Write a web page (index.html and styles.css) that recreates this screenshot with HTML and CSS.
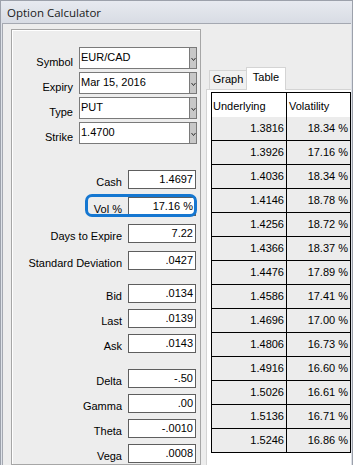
FILE: index.html
```html
<!DOCTYPE html>
<html lang="en">
<head>
    <meta charset="UTF-8">
    <title>Option Calculator</title>
    <link rel="stylesheet" href="styles.css">
</head>
<body>
    <div class="window">
        <div class="titlebar">Option Calculator</div>
        <div class="client">
            <div class="panel">
                <div class="combos">
                    <div class="row"><label>Symbol</label><div class="combo"><span>EUR/CAD</span><i class="drop"><svg width="5" height="3" viewBox="0 0 5 3"><polyline points="0.5,0 2.5,2.5 4.5,0" fill="none" stroke="#333" stroke-width="1"/></svg></i></div></div>
                    <div class="row"><label>Expiry</label><div class="combo"><span>Mar 15, 2016</span><i class="drop"><svg width="5" height="3" viewBox="0 0 5 3"><polyline points="0.5,0 2.5,2.5 4.5,0" fill="none" stroke="#333" stroke-width="1"/></svg></i></div></div>
                    <div class="row"><label>Type</label><div class="combo"><span>PUT</span><i class="drop"><svg width="5" height="3" viewBox="0 0 5 3"><polyline points="0.5,0 2.5,2.5 4.5,0" fill="none" stroke="#333" stroke-width="1"/></svg></i></div></div>
                    <div class="row"><label>Strike</label><div class="combo"><span>1.4700</span><i class="drop"><svg width="5" height="3" viewBox="0 0 5 3"><polyline points="0.5,0 2.5,2.5 4.5,0" fill="none" stroke="#333" stroke-width="1"/></svg></i></div></div>
                </div>

                <div class="fields fields-main">
                    <div class="row"><label>Cash</label><div class="field">1.4697</div></div>
                    <div class="row focused"><label>Vol %</label><div class="field">17.16 %</div></div>
                    <div class="row"><label>Days to Expire</label><div class="field">7.22</div></div>
                    <div class="row"><label>Standard Deviation</label><div class="field">.0427</div></div>
                </div>

                <div class="fields fields-quote">
                    <div class="row"><label>Bid</label><div class="field">.0134</div></div>
                    <div class="row"><label>Last</label><div class="field">.0139</div></div>
                    <div class="row"><label>Ask</label><div class="field">.0143</div></div>
                </div>

                <div class="fields fields-greeks">
                    <div class="row"><label>Delta</label><div class="field">-.50</div></div>
                    <div class="row"><label>Gamma</label><div class="field">.00</div></div>
                    <div class="row"><label>Theta</label><div class="field">-.0010</div></div>
                    <div class="row"><label>Vega</label><div class="field">.0008</div></div>
                </div>
            </div>

            <div class="tabs">
                <div class="tabstrip">
                    <div class="tab">Graph</div>
                    <div class="tab active">Table</div>
                </div>
                <div class="pane">
                    <div class="grid" id="vol-table">
                        <div class="head">Underlying</div>
                        <div class="head">Volatility</div>
                    </div>
                </div>
            </div>
        </div>
    </div>

    <script>
        const rows = [
            ['1.3816', '18.34 %'], ['1.3926', '17.16 %'], ['1.4036', '18.34 %'],
            ['1.4146', '18.78 %'], ['1.4256', '18.72 %'], ['1.4366', '18.37 %'],
            ['1.4476', '17.89 %'], ['1.4586', '17.41 %'], ['1.4696', '17.00 %'],
            ['1.4806', '16.73 %'], ['1.4916', '16.60 %'], ['1.5026', '16.61 %'],
            ['1.5136', '16.71 %'], ['1.5246', '16.86 %']
        ];

        const table = document.getElementById('vol-table');
        rows.forEach(r => {
            r.forEach(val => {
                const cell = document.createElement('div');
                cell.className = 'cell';
                cell.innerText = val;
                table.appendChild(cell);
            });
        });
    </script>
</body>
</html>
```

FILE: styles.css
```css
body {
    margin: 0;
    width: 353px;
    height: 465px;
    overflow: hidden;
    font-family: "Liberation Sans", Arial, sans-serif;
    font-size: 11px;
    color: #000;
}

.window {
    box-sizing: border-box;
    height: 465px;
    display: flex;
    flex-direction: column;
    border: 1px solid #9ca1ab;
    border-bottom: 0;
    padding: 0 1px;
    background: #dde1e8;
}

.titlebar {
    height: 22px;
    margin: 0 -1px;
    padding-left: 6px;
    display: flex;
    align-items: center;
    font-family: "Open Sans", sans-serif;
    font-size: 11.5px;
    color: #1a1a1a;
    background: linear-gradient(#e7eaf0, #d8dce4);
}

.client {
    flex: 1;
    min-height: 0;
    display: flex;
    border-top: 1px solid #a4a8b1;
    border-left: 1px solid #a4a8b1;
    background: #ededed;
    padding: 5px 0 0 8px;
}

/* left side: inputs */
.panel {
    box-sizing: border-box;
    width: 190px;
    border: 1px solid #a6a6a6;
    box-shadow: inset 1px 1px 0 #fff;
    padding: 17px 3px 0 0;
    display: flex;
    flex-direction: column;
}

.combos {
    display: flex;
    flex-direction: column;
    gap: 3px;
}

.row {
    display: flex;
    justify-content: flex-end;
    align-items: flex-end;
    gap: 6px;
}

.row label {
    line-height: 13px;
    white-space: nowrap;
}

.combo {
    box-sizing: border-box;
    width: 118px;
    height: 22px;
    border: 1px solid #7a7a7a;
    background: #fff;
    display: flex;
}

.combo span {
    flex: 1;
    padding: 3px 0 0 1px;
    line-height: 13px;
}

.drop {
    width: 6px;
    border-left: 1px solid #7a7a7a;
    background: #c8c8c8;
    display: flex;
    align-items: center;
    justify-content: center;
    padding-top: 3px;
}

.fields {
    display: flex;
    flex-direction: column;
    padding-right: 1px;
}

.fields-main {
    margin-top: 26px;
    gap: 8px;
}

.fields-quote {
    margin-top: 14px;
    gap: 6px;
}

.fields-greeks {
    margin-top: 16px;
    gap: 6px;
}

.field {
    box-sizing: border-box;
    width: 68px;
    height: 19px;
    border: 1px solid #5e5e5e;
    background: #fff;
    text-align: right;
    padding-right: 2px;
    line-height: 17px;
}

.focused {
    align-self: flex-end;
    position: relative;
}

.focused::after {
    content: "";
    position: absolute;
    left: -9px;
    right: -1px;
    top: -3px;
    bottom: -1px;
    border: 3px solid #1577d1;
    border-radius: 7px;
}

/* right side: tabs */
.tabs {
    flex: 1;
    margin-left: 5px;
    padding-top: 38px;
    display: flex;
    flex-direction: column;
}

.tabstrip {
    display: flex;
    align-items: flex-end;
    height: 22px;
    padding-left: 3px;
}

.tab {
    box-sizing: border-box;
    width: 38px;
    height: 19px;
    border: 1px solid #d4d4d4;
    border-bottom: 0;
    background: #f0f0f0;
    padding-top: 2px;
    line-height: 13px;
    text-align: center;
}

.tab.active {
    width: 40px;
    height: 23px;
    margin-left: -1px;
    margin-bottom: -1px;
    padding-top: 3px;
    background: #fff;
    position: relative;
}

.pane {
    flex: 1;
    border-top: 1px solid #d4d4d4;
    border-left: 1px solid #d4d4d4;
    background: #fff;
    padding: 2px 0 0 4px;
}

.grid {
    display: grid;
    grid-template-columns: 75px 63px;
    width: max-content;
    border: 1px solid #000;
    border-bottom: 0;
}

.head, .cell {
    box-sizing: border-box;
    height: 24px;
    display: flex;
    align-items: center;
    line-height: 13px;
}

.head {
    background: #fff;
    padding: 2px 0 0 1px;
}

.head:nth-child(2) {
    padding-left: 2px;
}

.cell {
    background: #ececec;
    border-bottom: 1px solid #000;
    justify-content: flex-end;
    padding-right: 2px;
}

.head:nth-child(odd), .cell:nth-child(odd) {
    border-right: 1px solid #000;
}
```
